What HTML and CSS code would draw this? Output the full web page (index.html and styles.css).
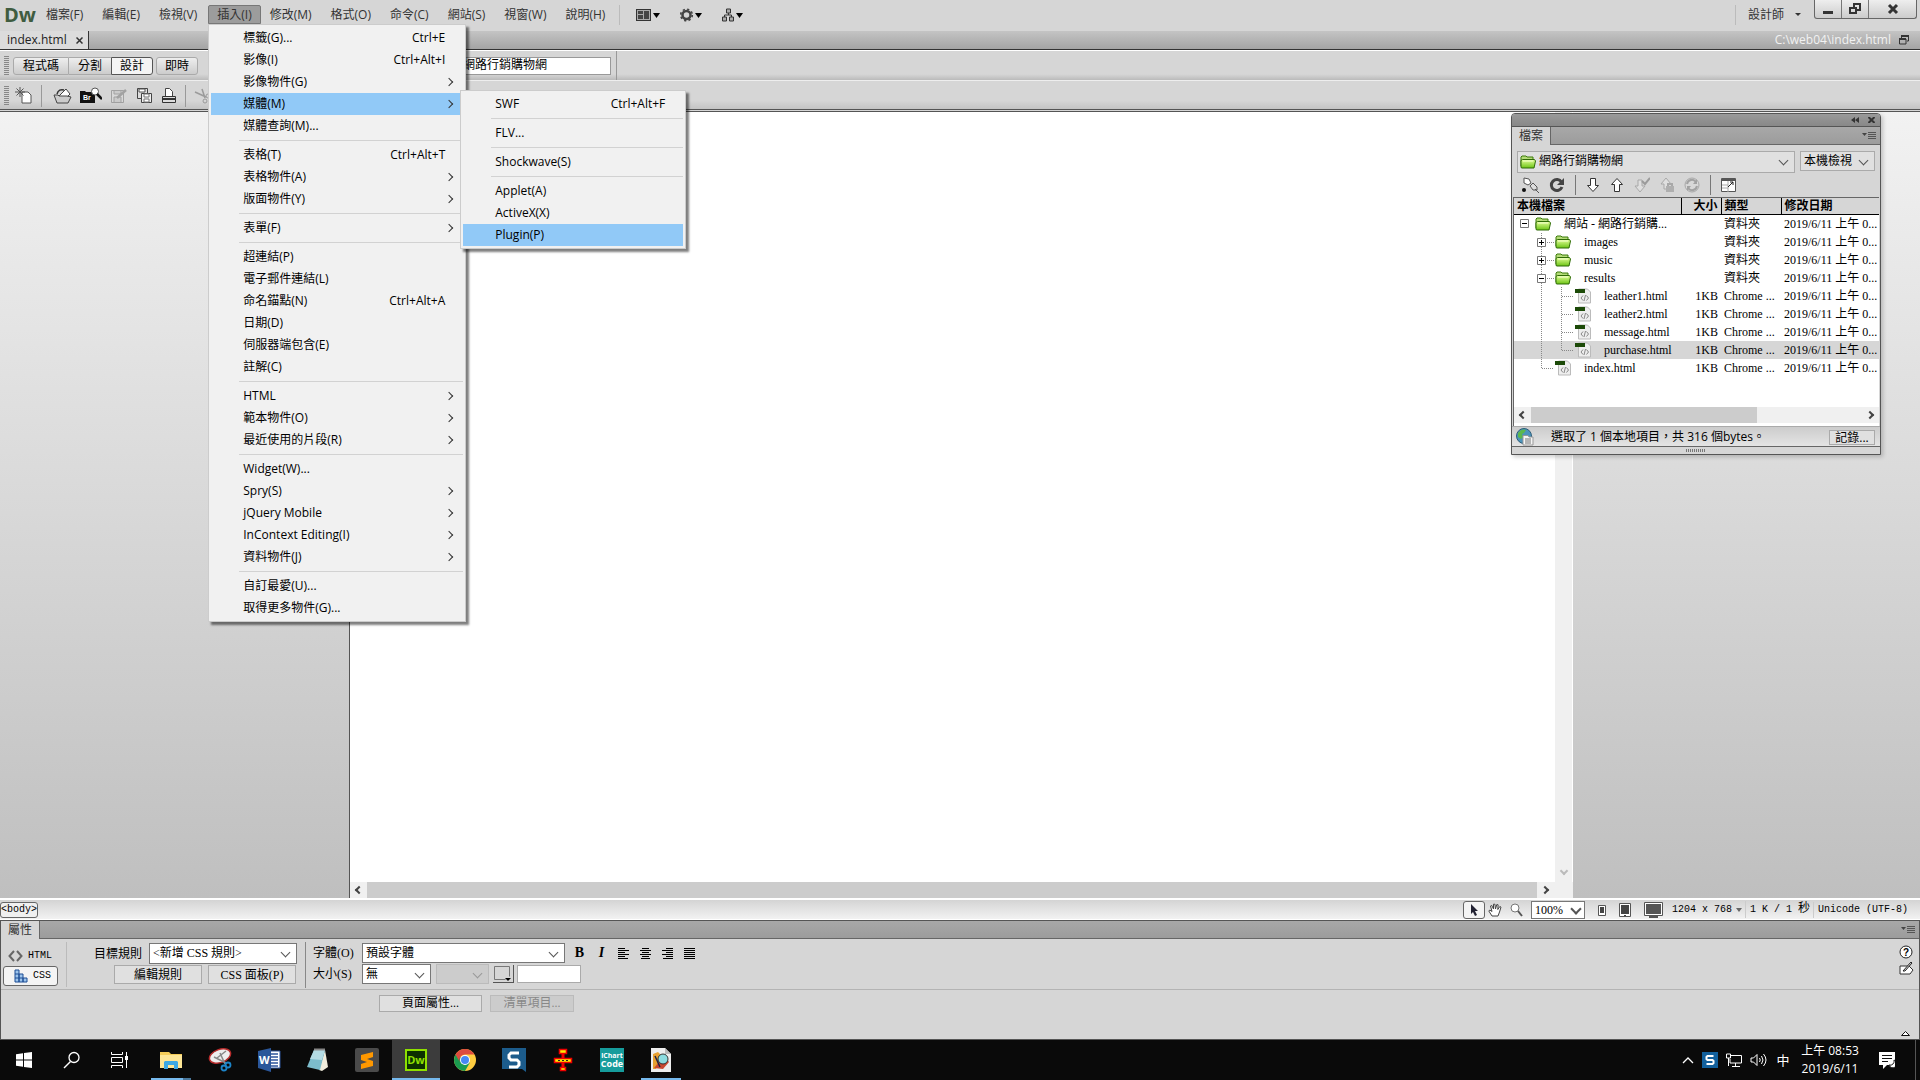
FILE: index.html
```html
<!DOCTYPE html>
<html lang="zh-TW">
<head>
    <meta charset="UTF-8">
    <meta name="viewport" content="width=device-width, initial-scale=1.0">
    <title>index.html</title>
    <link rel="stylesheet" href="styles.css">
</head>
<body>
    <!-- 共用圖示 -->
    <svg class="defs" width="0" height="0">
        <defs>
            <linearGradient id="green" x1="0" y1="0" x2="0" y2="1">
                <stop offset="0" stop-color="#e4ff9a"/>
                <stop offset="1" stop-color="#6cc414"/>
            </linearGradient>
            <symbol id="folder" viewBox="0 0 16 14">
                <path d="M1 11V2l1-1h4l1 1h6v3" fill="#b4dc78" stroke="#3c7a0a"/>
                <path d="M1 12.500V5.500L2.500 4.500H14.500L15.500 6L14 13H2Z" fill="url(#green)" stroke="#2f6b06"/>
                <path d="M3 6h10" stroke="#f4ffd0"/>
            </symbol>
            <symbol id="page" viewBox="0 0 16 16">
                <path d="M3.500 1h9l3 3v11h-12z" fill="#eee" stroke="#bbb"/>
                <rect x="0" y="1" width="10" height="4" fill="#1c4a08"/>
                <path d="M8 7.500L6 10l2 2.500M11.500 7.500l2 2.500-2 2.500M10.500 7l-1.500 6" fill="none" stroke="#888"/>
            </symbol>
            <symbol id="menu-lines" viewBox="0 0 14 8">
                <path d="M0 1h5L2.500 4z" fill="#444"/>
                <path d="M6 .5h8M6 2.500h8M6 4.500h8M6 6.500h8" stroke="#555"/>
            </symbol>
        </defs>
    </svg>

    <header class="menubar">
        <span class="logo">Dw</span>
        <nav class="menus">
            <button>檔案(F)</button>
            <button>編輯(E)</button>
            <button>檢視(V)</button>
            <div class="menu-open">
                <button class="active">插入(I)</button>
                <ul class="popup insert-menu">
                    <li>標籤(G)...<kbd>Ctrl+E</kbd></li>
                    <li>影像(I)<kbd>Ctrl+Alt+I</kbd></li>
                    <li class="more">影像物件(G)</li>
                    <li class="more selected">媒體(M)
                        <ul class="popup media-menu">
                            <li>SWF<kbd>Ctrl+Alt+F</kbd></li>
                            <li class="line"></li>
                            <li>FLV...</li>
                            <li class="line"></li>
                            <li>Shockwave(S)</li>
                            <li class="line"></li>
                            <li>Applet(A)</li>
                            <li>ActiveX(X)</li>
                            <li class="selected">Plugin(P)</li>
                        </ul>
                    </li>
                    <li>媒體查詢(M)...</li>
                    <li class="line"></li>
                    <li>表格(T)<kbd>Ctrl+Alt+T</kbd></li>
                    <li class="more">表格物件(A)</li>
                    <li class="more">版面物件(Y)</li>
                    <li class="line"></li>
                    <li class="more">表單(F)</li>
                    <li class="line"></li>
                    <li>超連結(P)</li>
                    <li>電子郵件連結(L)</li>
                    <li>命名錨點(N)<kbd>Ctrl+Alt+A</kbd></li>
                    <li>日期(D)</li>
                    <li>伺服器端包含(E)</li>
                    <li>註解(C)</li>
                    <li class="line"></li>
                    <li class="more">HTML</li>
                    <li class="more">範本物件(O)</li>
                    <li class="more">最近使用的片段(R)</li>
                    <li class="line"></li>
                    <li>Widget(W)...</li>
                    <li class="more">Spry(S)</li>
                    <li class="more">jQuery Mobile</li>
                    <li class="more">InContext Editing(I)</li>
                    <li class="more">資料物件(J)</li>
                    <li class="line"></li>
                    <li>自訂最愛(U)...</li>
                    <li>取得更多物件(G)...</li>
                </ul>
            </div>
            <button>修改(M)</button>
            <button>格式(O)</button>
            <button>命令(C)</button>
            <button>網站(S)</button>
            <button>視窗(W)</button>
            <button>說明(H)</button>
        </nav>
        <div class="layout-tools">
            <button aria-label="版面">
                <svg width="24" height="14" viewBox="0 0 24 14"><rect x=".5" y="1.500" width="14" height="11" fill="#aaa" stroke="#333"/><path d="M2 3h5v3H2zM2 7h5v4H2zM8 3h5v8H8z" fill="#444"/><path d="M17 5h7l-3.500 5z"/></svg>
            </button>
            <button aria-label="擴充功能">
                <svg width="22" height="14" viewBox="0 0 22 14"><circle cx="6.500" cy="7" r="4" fill="none" stroke="#444" stroke-width="2.500"/><circle cx="6.500" cy="7" r="5.800" fill="none" stroke="#444" stroke-width="1.600" stroke-dasharray="2.200 2.350"/><path d="M15 5h7l-3.500 5z"/></svg>
            </button>
            <button aria-label="網站">
                <svg width="22" height="14" viewBox="0 0 22 14"><path d="M4.500 1h4v4h-4zM.5 9h4v4h-4zM7.500 9h4v4h-4z" fill="#aaa" stroke="#333"/><path d="M6.500 5v2M2.500 9V7h7v2" fill="none" stroke="#333"/><path d="M14 5h7l-3.500 5z"/></svg>
            </button>
        </div>
        <button class="workspace-name">設計師<i class="tri"></i></button>
        <div class="window-buttons">
            <button aria-label="最小化"><svg width="12" height="12" viewBox="0 0 12 12"><path d="M1 8h10v3H1z" fill="#333"/></svg></button>
            <button aria-label="還原"><svg width="12" height="12" viewBox="0 0 12 12"><path d="M5 4V1h6v6H8M1 5h6v5H1z" fill="none" stroke="#333" stroke-width="2"/></svg></button>
            <button class="close" aria-label="關閉"><svg width="12" height="12" viewBox="0 0 12 12"><path d="M2 2l8 8M10 2l-8 8" stroke="#333" stroke-width="3"/></svg></button>
        </div>
    </header>

    <div class="doc-tabs">
        <div class="doc-tab">index.html<button aria-label="關閉檔案"><svg width="7" height="7" viewBox="0 0 7 7"><path d="M.5.5l6 6M6.500.5l-6 6" stroke="#333" stroke-width="1.500"/></svg></button></div>
        <span class="doc-path">C:\web04\index.html</span>
        <svg width="10" height="10" viewBox="0 0 10 10"><path d="M2.500 3V1h7v5H8M.5 4h6.500v5H.5z" fill="none" stroke="#333"/><path d="M2 1h8M0 4h7" stroke="#333" stroke-width="2"/></svg>
    </div>

    <div class="view-bar">
        <div class="view-group">
            <i class="grip"></i>
            <div class="views">
                <button>程式碼</button>
                <button>分割</button>
                <button class="on">設計</button>
            </div>
            <button class="live">即時</button>
            <input type="text" class="doc-title" aria-label="標題" value="網路行銷購物網">
        </div>
    </div>

    <div class="standard-bar">
        <i class="grip"></i>
        <button aria-label="開新檔案"><svg width="18" height="18" viewBox="0 0 18 18"><path d="M7 5h6l3 3v8H7z" fill="#fff" stroke="#555"/><path d="M5 0v10M0 5h10M1.500 1.500l7 7M8.500 1.500l-7 7" stroke="#555"/></svg></button>
        <i class="rule"></i>
        <button class="open" aria-label="開啟"><svg width="19" height="18" viewBox="0 0 19 18"><path d="M6 9l7-7 4 5-4 4z" fill="#fff" stroke="#444"/><path d="M1 8h4l1 1h8l4 1-3 6H4z" fill="#ccc" stroke="#444"/><path d="M4 7c1-4 4-5 7-4" fill="none" stroke="#333" stroke-width="1.500"/></svg></button>
        <button aria-label="Bridge"><svg width="22" height="18" viewBox="0 0 22 18"><path d="M0 4h5l1 1h9v11H0z" fill="#111"/><circle cx="15" cy="4.500" r="3.500" fill="#fff" stroke="#555"/><path d="M17 7l5 5" stroke="#111" stroke-width="2.500"/><text x="3" y="13" font-family="Liberation Sans" font-size="7" font-weight="bold" fill="#fff">Br</text></svg></button>
        <button class="dim" aria-label="儲存"><svg width="18" height="18" viewBox="0 0 18 18"><path d="M1.500 3.500h12v12h-12z" fill="#ddd" stroke="#555"/><path d="M4 15v-5h7v5M4 4v3h7V4" fill="#bbb" stroke="#555"/><path d="M7 11l9-8" stroke="#555" stroke-width="2.500"/></svg></button>
        <button aria-label="全部儲存"><svg width="17" height="18" viewBox="0 0 17 18"><path d="M1.500 1.500h10v10h-10z" fill="#ddd" stroke="#444"/><path d="M3 2h6v3H3z" fill="#fff" stroke="#555"/><path d="M5.500 6.500h10v9h-10z" fill="#eee" stroke="#444"/><path d="M8 7h5v3H8zM8 12h5v3H8z" fill="#fff" stroke="#777"/></svg></button>
        <button aria-label="列印"><svg width="16" height="18" viewBox="0 0 16 18"><path d="M4.500 9V1.500h4l3 3V9" fill="#fff" stroke="#444"/><path d="M1.500 9.500h13v6h-13z" fill="#ddd" stroke="#333"/><path d="M2 12h12" stroke="#333" stroke-width="2"/></svg></button>
        <i class="rule"></i>
        <button class="dim" aria-label="剪下"><svg width="18" height="18" viewBox="0 0 18 18"><path d="M1 5l11 5M8 2l3 9" stroke="#444" stroke-width="1.500"/><circle cx="14" cy="9" r="2" fill="none" stroke="#444"/><circle cx="11" cy="14" r="2" fill="none" stroke="#444"/></svg></button>
    </div>

    <main class="workspace">
        <div class="document">
            <div class="page"></div>
            <div class="vscroll"><i class="arrow down"></i></div>
            <div class="hscroll">
                <i class="arrow left"></i>
                <div class="thumb"></div>
                <i class="arrow right"></i>
            </div>
        </div>

        <section class="files-panel">
            <div class="panel-title">
                <svg width="8" height="6" viewBox="0 0 8 6"><path d="M4 0v6L0 3zM8 0v6L4 3z" fill="#333"/></svg>
                <svg width="7" height="6" viewBox="0 0 7 6"><path d="M.5 0l6 6M6.500 0l-6 6" stroke="#333" stroke-width="2"/></svg>
            </div>
            <div class="panel-head">
                <span class="panel-tab">檔案</span>
                <svg width="14" height="8"><use href="#menu-lines"/></svg>
            </div>
            <div class="site-row">
                <span class="select site">
                    <svg width="16" height="14"><use href="#folder"/></svg>
                    <select aria-label="網站"><option>網路行銷購物網</option></select>
                </span>
                <span class="select site-view">
                    <select aria-label="檢視"><option>本機檢視</option></select>
                </span>
            </div>
            <div class="file-tools">
                <button aria-label="連線"><svg width="18" height="16" viewBox="0 0 18 16"><path d="M3 1l5 1 2 4-3 2-4-2z" fill="#fff" stroke="#555"/><path d="M9 9l3-3 4 4v3h-4z" fill="#ddd" stroke="#555"/><path d="M14 12l4 4" stroke="#555"/><circle cx="3" cy="13" r="2" fill="#111"/></svg></button>
                <button aria-label="重新整理"><svg width="16" height="16" viewBox="0 0 16 16"><path d="M12.500 5A5.500 5.500 0 1 0 13 10" fill="none" stroke="#444" stroke-width="3"/><path d="M8 8h7V1z" fill="#444"/></svg></button>
                <i class="rule"></i>
                <button aria-label="取得檔案"><svg width="14" height="16" viewBox="0 0 14 16"><path d="M4.500 1.500h5v7h3L7 14.500 1.500 8.500h3z" fill="#fff" stroke="#333"/></svg></button>
                <button aria-label="上傳檔案"><svg width="14" height="16" viewBox="0 0 14 16"><path d="M4.500 14.500h5v-7h3L7 1.500 1.500 7.500h3z" fill="#fff" stroke="#333"/></svg></button>
                <button class="dim" aria-label="取出"><svg width="16" height="16" viewBox="0 0 16 16"><path d="M4 3h4v6h3l-5 6-5-6h3z" fill="#eee" stroke="#666"/><path d="M8 4l3 3 5-6" fill="none" stroke="#444" stroke-width="2"/></svg></button>
                <button class="dim" aria-label="存回"><svg width="14" height="16" viewBox="0 0 14 16"><path d="M4 12V7H1l5-6 5 6H8v5z" fill="#eee" stroke="#666"/><path d="M6 9h8v6H6z" fill="#777"/><path d="M8 9V7h4v2" fill="none" stroke="#666" stroke-width="2"/></svg></button>
                <button class="dim" aria-label="同步"><svg width="16" height="16" viewBox="0 0 16 16"><circle cx="8" cy="8" r="7" fill="#ddd" stroke="#666"/><path d="M3 7a5 5 0 0 1 9-2M13 9a5 5 0 0 1-9 2" fill="none" stroke="#555" stroke-width="2"/><path d="M13 2v5H9zM3 14V9h4z" fill="#555"/></svg></button>
                <i class="rule"></i>
                <button aria-label="展開"><svg width="15" height="15" viewBox="0 0 15 15"><path d="M.5.5h14v13H.5z" fill="#fff" stroke="#555"/><path d="M0 2h15" stroke="#555" stroke-width="2"/><path d="M1 7h6M1 10h6M7 3v11" stroke="#aaa"/><path d="M7 9l5-5M9 4h3v3" fill="none" stroke="#222"/></svg></button>
            </div>
            <div class="file-list">
                <table>
                    <colgroup><col class="c-name"><col class="c-size"><col class="c-type"><col></colgroup>
                    <thead>
                        <tr><th>本機檔案</th><th class="num">大小</th><th>類型</th><th>修改日期</th></tr>
                    </thead>
                    <tbody>
                        <tr>
                            <td><div class="node"><svg width="21" height="18"><path d="M6.500 4.500h8v8h-8z" fill="#fff" stroke="#777"/><path d="M8 8.500h5" stroke="#000"/></svg><svg width="16" height="14"><use href="#folder"/></svg><span>網站 - 網路行銷購...</span></div></td>
                            <td></td><td>資料夾</td><td>2019/6/11 上午 0...</td>
                        </tr>
                        <tr>
                            <td><div class="node"><svg width="41" height="18"><path class="dots" d="M27.500 0v18M33 9.500h8"/><path d="M23.500 5.500h8v8h-8z" fill="#fff" stroke="#777"/><path d="M25 9.500h5M27.500 7v5" stroke="#000"/></svg><svg width="16" height="14"><use href="#folder"/></svg><span>images</span></div></td>
                            <td></td><td>資料夾</td><td>2019/6/11 上午 0...</td>
                        </tr>
                        <tr>
                            <td><div class="node"><svg width="41" height="18"><path class="dots" d="M27.500 0v18M33 9.500h8"/><path d="M23.500 5.500h8v8h-8z" fill="#fff" stroke="#777"/><path d="M25 9.500h5M27.500 7v5" stroke="#000"/></svg><svg width="16" height="14"><use href="#folder"/></svg><span>music</span></div></td>
                            <td></td><td>資料夾</td><td>2019/6/11 上午 0...</td>
                        </tr>
                        <tr>
                            <td><div class="node"><svg width="41" height="18"><path class="dots" d="M27.500 0v18M33 9.500h8"/><path d="M23.500 5.500h8v8h-8z" fill="#fff" stroke="#777"/><path d="M25 9.500h5" stroke="#000"/></svg><svg width="16" height="14"><use href="#folder"/></svg><span>results</span></div></td>
                            <td></td><td>資料夾</td><td>2019/6/11 上午 0...</td>
                        </tr>
                        <tr>
                            <td><div class="node"><svg width="61" height="18"><path class="dots" d="M27.500 0v18M47.500 0v18M48 9.500h12"/></svg><svg width="16" height="16"><use href="#page"/></svg><span>leather1.html</span></div></td>
                            <td class="num">1KB</td><td>Chrome ...</td><td>2019/6/11 上午 0...</td>
                        </tr>
                        <tr>
                            <td><div class="node"><svg width="61" height="18"><path class="dots" d="M27.500 0v18M47.500 0v18M48 9.500h12"/></svg><svg width="16" height="16"><use href="#page"/></svg><span>leather2.html</span></div></td>
                            <td class="num">1KB</td><td>Chrome ...</td><td>2019/6/11 上午 0...</td>
                        </tr>
                        <tr>
                            <td><div class="node"><svg width="61" height="18"><path class="dots" d="M27.500 0v18M47.500 0v18M48 9.500h12"/></svg><svg width="16" height="16"><use href="#page"/></svg><span>message.html</span></div></td>
                            <td class="num">1KB</td><td>Chrome ...</td><td>2019/6/11 上午 0...</td>
                        </tr>
                        <tr class="current">
                            <td><div class="node"><svg width="61" height="18"><path class="dots" d="M27.500 0v18M47.500 0v10M48 9.500h12"/></svg><svg width="16" height="16"><use href="#page"/></svg><span>purchase.html</span></div></td>
                            <td class="num">1KB</td><td>Chrome ...</td><td>2019/6/11 上午 0...</td>
                        </tr>
                        <tr>
                            <td><div class="node"><svg width="41" height="18"><path class="dots" d="M27.500 0v10M28 9.500h12"/></svg><svg width="16" height="16"><use href="#page"/></svg><span>index.html</span></div></td>
                            <td class="num">1KB</td><td>Chrome ...</td><td>2019/6/11 上午 0...</td>
                        </tr>
                    </tbody>
                </table>
                <div class="hscroll">
                    <i class="arrow left"></i>
                    <div class="thumb"></div>
                    <i class="arrow right"></i>
                </div>
            </div>
            <div class="files-status">
                <svg width="18" height="18" viewBox="0 0 18 18"><circle cx="8" cy="8" r="7.500" fill="#4c94bc" stroke="#2c5c78"/><path d="M2 5c3-4 6-4 8-3l-2 3-2 1 1 3-2 2-3-2z" fill="#5cb84c"/><path d="M7 7.500h5l1 1.500h4v8H7z" fill="#f4f4f4" stroke="#999"/><path d="M9 11h6M9 13h6M9 15h6" stroke="#777"/></svg>
                <span>選取了 1 個本地項目，共 316 個bytes。</span>
                <button>記錄...</button>
            </div>
            <div class="resize-grip"><i></i></div>
        </section>
    </main>

    <div class="status-bar">
        <button class="tag">&lt;body&gt;</button>
        <div class="status-tools">
            <button class="pointer" aria-label="選取工具"><svg width="10" height="12" viewBox="0 0 10 12"><path d="M2 0v10l2-2 2 4 2-1-2-4h3z" fill="#223"/></svg></button>
            <button aria-label="手形工具"><svg width="14" height="14" viewBox="0 0 14 14"><path d="M4 13L.8 8l1-1L4 8.500 2.500 3l1.200-.6L5.500 6V1.200h1.400L7.500 6l1.300-4.500 1.300.3L9.800 6.500l2-3 1.200.6L11.500 9 10 13z" fill="#fff" stroke="#444"/></svg></button>
            <button aria-label="縮放工具"><svg width="13" height="14" viewBox="0 0 13 14"><circle cx="5" cy="5" r="4" fill="#fff" stroke="#777"/><path d="M8 8l4 5" stroke="#555" stroke-width="2"/></svg></button>
            <span class="select zoom"><select aria-label="縮放"><option>100%</option></select></span>
            <button class="device" aria-label="手機"><svg width="8" height="12" viewBox="0 0 8 12"><path d="M.5 1.500h7v10h-7z" fill="#fff" stroke="#555"/><path d="M2 3h4v6H2z" fill="#444"/></svg></button>
            <button class="device" aria-label="平板"><svg width="12" height="14" viewBox="0 0 12 14"><path d="M.5.5h11v13H.5z" fill="#fff" stroke="#555"/><path d="M2 2h8v9H2zM5 12h2v1H5z" fill="#444"/></svg></button>
            <button class="device" aria-label="桌面"><svg width="19" height="16" viewBox="0 0 19 16"><path d="M.5.5h18v13H.5z" fill="#fff" stroke="#555"/><path d="M2 2h15v10H2zM5 14h9v2H5z" fill="#555"/></svg></button>
            <button class="size">1204 x 768<i class="mini-arrow"></i></button>
            <span class="info">1 K / 1 <b>秒</b></span>
            <span class="info">Unicode (UTF-8)</span>
        </div>
    </div>

    <section class="properties">
        <div class="panel-head">
            <span class="panel-tab">屬性</span>
            <svg width="14" height="8"><use href="#menu-lines"/></svg>
        </div>
        <div class="prop-main">
            <div class="modes">
                <button><svg width="15" height="12" viewBox="0 0 15 12"><path d="M6 1L1.500 6 6 11M9 1l4.500 5L9 11" fill="none" stroke="#666" stroke-width="2"/></svg>HTML</button>
                <button class="on"><svg width="14" height="14" viewBox="0 0 14 14"><path d="M1 1h4v12H1zM5 5h4v8H5zM9 9h4v4H9zM1 5h4M1 9h8" fill="#9cc4ec" stroke="#1c4c94"/></svg>CSS</button>
            </div>
            <div class="rules">
                <label for="rule">目標規則</label>
                <span class="select"><select id="rule"><option>&lt;新增 CSS 規則&gt;</option></select></span>
                <div class="rule-buttons">
                    <button class="push">編輯規則</button>
                    <button class="push">CSS 面板(P)</button>
                </div>
            </div>
            <div class="fonts">
                <div class="line-row">
                    <label for="font">字體(O)</label>
                    <span class="select font"><select id="font"><option>預設字體</option></select></span>
                    <button class="bold">B</button>
                    <button class="italic">I</button>
                    <button aria-label="靠左對齊"><svg width="11" height="11" viewBox="0 0 11 11"><path d="M0 .5h7M0 2.500h11M0 4.500h7M0 6.500h11M0 8.500h7M0 10.500h10" stroke="#000"/></svg></button>
                    <button aria-label="置中對齊"><svg width="11" height="11" viewBox="0 0 11 11"><path d="M2 .5h7M0 2.500h11M2 4.500h7M0 6.500h11M2 8.500h7M1 10.500h9" stroke="#000"/></svg></button>
                    <button aria-label="靠右對齊"><svg width="11" height="11" viewBox="0 0 11 11"><path d="M4 .5h7M0 2.500h11M4 4.500h7M0 6.500h11M4 8.500h7M1 10.500h10" stroke="#000"/></svg></button>
                    <button aria-label="左右對齊"><svg width="11" height="11" viewBox="0 0 11 11"><path d="M0 .5h11M0 2.500h11M0 4.500h11M0 6.500h11M0 8.500h11M0 10.500h11" stroke="#000"/></svg></button>
                </div>
                <div class="line-row">
                    <label for="size">大小(S)</label>
                    <span class="select font-size"><select id="size"><option>無</option></select></span>
                    <span class="select unit"><select aria-label="單位" disabled><option></option></select></span>
                    <button class="swatch" aria-label="文字顏色"><svg width="19" height="18" viewBox="0 0 19 18"><path d="M1.500 14.500v-13h15v10M1.500 14.500h11" fill="none" stroke="#777"/><path d="M12 13h6l-3 3z"/></svg></button>
                    <input type="text" class="color" aria-label="顏色值">
                </div>
            </div>
            <div class="help">
                <button aria-label="說明"><svg width="14" height="14" viewBox="0 0 14 14"><circle cx="7" cy="7" r="6" fill="#fff" stroke="#222"/><text x="7" y="11" text-anchor="middle" font-family="Liberation Sans" font-size="10" font-weight="bold">?</text></svg></button>
                <button aria-label="快速標籤編輯"><svg width="15" height="14" viewBox="0 0 15 14"><path d="M1 5h9l4 4-3 4H1z" fill="#fff" stroke="#333"/><path d="M4 10l8-9 1 1-7 8z" fill="#ddd" stroke="#222"/></svg></button>
            </div>
        </div>
        <div class="prop-more">
            <button class="push page-props">頁面屬性...</button>
            <button class="push list-item" disabled>清單項目...</button>
            <svg width="9" height="5" viewBox="0 0 9 5"><path d="M.5 4.500L4.500.5l4 4z" fill="#fff" stroke="#111"/></svg>
        </div>
    </section>

    <footer class="taskbar">
        <div class="apps">
            <button aria-label="開始"><svg width="16" height="16" viewBox="0 0 16 16"><path d="M0 2.300L7 1.300v6.200H0zM8 1.100L16 0v7.500H8zM0 8.500h7v6.200l-7-1zM8 8.500h8V16l-8-1.100z" fill="#fff"/></svg></button>
            <button aria-label="搜尋"><svg width="18" height="18" viewBox="0 0 18 18"><circle cx="11" cy="6.500" r="5" fill="none" stroke="#fff" stroke-width="1.300"/><path d="M7.500 10.500L1 17" stroke="#fff" stroke-width="1.500"/></svg></button>
            <button class="task-view" aria-label="工作檢視"><svg width="18" height="16" viewBox="0 0 18 16"><path d="M.5 0v2.500h11V0M.5 5.500h11v5H.5zM.5 16v-2.500h11V16M15.500 0v16" fill="none" stroke="#fff"/><path d="M14 4h3v4h-3z" fill="#fff"/></svg></button>
            <button class="running stacked" aria-label="檔案總管"><svg width="24" height="20" viewBox="0 0 24 20"><path d="M1 2h9l2 2h11v14H1z" fill="#f4cc58"/><path d="M1 5h22v13H1z" fill="#fde696"/><path d="M5 19v-7l1-1h12l1 1v7h-4v-4H9v4z" fill="#3ca8e4"/></svg></button>
            <button aria-label="剪取工具"><svg width="24" height="24" viewBox="0 0 24 24"><ellipse cx="12" cy="8" rx="11" ry="6.500" transform="rotate(-20 12 8)" fill="#eee" stroke="#b82c2c" stroke-width="1.500"/><path d="M9 10l9-7M12 5l5 11M6 9l12 6" stroke="#888" stroke-width="1.500"/><circle cx="16" cy="20" r="2.500" fill="none" stroke="#1c84c8" stroke-width="1.800"/><circle cx="20" cy="17" r="2.500" fill="none" stroke="#1c84c8" stroke-width="1.800"/></svg></button>
            <button aria-label="Word"><svg width="24" height="24" viewBox="0 0 24 24"><path d="M10 3h13v17H10z" fill="#fff" stroke="#2c549c"/><path d="M14 6h7M14 9h7M14 12h7M14 15h7M14 18h7" stroke="#2c549c" stroke-width="1.300"/><path d="M1 3l13-3v24L1 20z" fill="#2b579a"/><text x="2" y="16" font-family="Open Sans" font-size="11" font-weight="bold" fill="#fff">W</text></svg></button>
            <button aria-label="記事本"><svg width="24" height="24" viewBox="0 0 24 24"><path d="M19 2l3 17-6 4-3-1z" fill="#f0ecdc"/><path d="M8 2h11l-5 20-13-3z" fill="#7cbccc"/><path d="M8 2h11l-3 10-12-1z" fill="#b4dce4"/><path d="M8 1.500h11" stroke="#888" stroke-width="2"/></svg></button>
            <button aria-label="Sublime Text"><svg width="24" height="24" viewBox="0 0 24 24"><rect width="24" height="24" rx="2" fill="#4a4a4a"/><path d="M18 4v5l-6 2 6 2v5L6 21v-5l6-2-6-2V7z" fill="#ff9800"/></svg></button>
            <button class="running focused" aria-label="Dreamweaver"><svg width="22" height="22" viewBox="0 0 22 22"><rect x="1" y="1" width="20" height="20" fill="#0c3000" stroke="#8fe000" stroke-width="2"/><text x="11" y="15" text-anchor="middle" font-family="Open Sans" font-size="11" font-weight="bold" fill="#8fe000">Dw</text></svg></button>
            <button aria-label="Chrome"><svg width="22" height="22" viewBox="0 0 22 22"><circle cx="11" cy="11" r="11" fill="#ffcd40"/><path d="M11 11L1.500 5.500A11 11 0 0 0 11 22l4.800-8.300z" fill="#1a9c50"/><path d="M1.500 5.500a11 11 0 0 1 19 0H11a5.500 5.500 0 0 0-4.800 8.300z" fill="#dd4b3e"/><circle cx="11" cy="11" r="5" fill="#fff"/><circle cx="11" cy="11" r="4" fill="#4688f4"/></svg></button>
            <button aria-label="Snagit"><svg width="24" height="24" viewBox="0 0 24 24"><path d="M0 0h24v24l-4-3H0z" fill="#1c5c8c"/><path d="M17 5H9L7 7v3l2 2h6l2 2v3l-2 2H7" fill="none" stroke="#fff" stroke-width="3"/></svg></button>
            <button aria-label="流程圖"><svg width="20" height="24" viewBox="0 0 20 24"><path d="M10 4v18" stroke="#e00" stroke-width="3"/><path d="M6.500 1.500h7v4h-7zM1.500 10.500h17v4h-17zM7.500 19.500h5v3h-5z" fill="#fe0" stroke="#e00" stroke-width="1.500"/><path d="M5 12.500h2M9 12.500h2M13 12.500h2" stroke="#222"/></svg></button>
            <button aria-label="iChart Code"><svg width="24" height="24" viewBox="0 0 24 24"><rect width="24" height="24" fill="#169c9c"/><text x="12" y="10" text-anchor="middle" font-family="Open Sans" font-size="7" font-weight="bold" fill="#fff">iChart</text><text x="12" y="19" text-anchor="middle" font-family="Open Sans" font-size="9" font-weight="bold" fill="#fff">Code</text></svg></button>
            <button class="running" aria-label="小畫家"><svg width="20" height="24" viewBox="0 0 20 24"><path d="M0 0h14l6 6v18H0z" fill="#eee"/><path d="M2 6l5-2 4 4-6 13H2z" fill="#e8a030"/><path d="M3 20l10-12 5 6-6 7z" fill="#c84830"/><circle cx="12" cy="11" r="5" fill="#8cdce0" stroke="#333"/><path d="M4 8l5 11" stroke="#224" stroke-width="1.500"/><path d="M14 0l6 6h-6z" fill="#bbb"/></svg></button>
        </div>
        <div class="tray">
            <svg width="12" height="7" viewBox="0 0 12 7"><path d="M1 6l5-5 5 5" fill="none" stroke="#fff" stroke-width="1.300"/></svg>
            <svg width="16" height="16" viewBox="0 0 16 16"><rect width="16" height="16" fill="#12609c"/><path d="M11.500 4h-6L4.500 5v2l1 1h5l1 1v2l-1 1h-6" fill="none" stroke="#fff" stroke-width="2"/></svg>
            <svg width="16" height="14" viewBox="0 0 16 14"><path d="M5 2.500h10.500v7.500H4V6M9.500 10v3M6 13.500h8M.5 1h4v4h-4zM2.500 5v8" fill="none" stroke="#fff"/></svg>
            <svg width="17" height="14" viewBox="0 0 17 14"><path d="M1 5h2.500L7 1.500v11L3.500 9H1zM9.500 5q1.500 2 0 4M11.500 3q3 4 0 8M13.500 1q5 6 0 12" fill="none" stroke="#fff"/></svg>
            <span class="ime">中</span>
            <div class="clock"><time>上午 08:53</time><time>2019/6/11</time></div>
            <button aria-label="通知"><svg width="16" height="17" viewBox="0 0 16 17"><path d="M0 0h16v13H8l-4 4v-4H0z" fill="#fff"/><path d="M3 3.500h10M3 6.500h10M3 9.500h6" stroke="#111"/><path d="M15 8a4 4 0 1 1-5 5 4 4 0 0 0 5-5" fill="#fff" stroke="#222"/></svg></button>
        </div>
    </footer>
</body>
</html>
```
FILE: styles.css
```css
:root {
    --gray: #d6d6d6;
    --ui: "Open Sans", "Noto Sans CJK TC", sans-serif;
    --pixel: "Liberation Serif", "Noto Sans CJK TC", serif;
    --mono: "Liberation Mono", "Noto Sans CJK TC", monospace;
}

* {
    box-sizing: border-box;
    margin: 0;
    padding: 0;
}

body {
    display: flex;
    flex-direction: column;
    height: 100vh;
    overflow: hidden;
    background: var(--gray);
    font: 12px/18px var(--ui);
    color: #000;
}

button, input, select {
    font: inherit;
    color: inherit;
    border: 0;
    border-radius: 0;
    background: none;
}

svg {
    display: block;
    flex: none;
}

.defs {
    position: absolute;
}

/* 選單列 */
.menubar {
    display: flex;
    align-items: center;
    height: 31px;
    flex: none;
    padding-bottom: 2px;
}

.logo {
    width: 38px;
    padding-left: 4px;
    font: bold 20px/26px var(--ui);
    color: #3f5c40;
}

.menus {
    display: flex;
    gap: 3px;
    color: #333;
}

.menus > button, .menu-open > button {
    height: 19px;
    padding: 0 8px;
}

.menu-open {
    position: relative;
    margin-right: -2px;
}

.menu-open > .active {
    background: #9c9c9c;
    border: 1px solid #777;
    border-radius: 2px 2px 0 0;
    padding: 0 8px;
    line-height: 17px;
    display: block;
}

.popup {
    position: absolute;
    z-index: 10;
    list-style: none;
    padding: 2px;
    background: #f1f1f1;
    border: 1px solid #ccc;
    box-shadow: 3px 3px 2px rgba(0, 0, 0, 0.5);
    color: #000;
}

.insert-menu {
    top: 19px;
    left: 0;
    width: 258px;
}

.media-menu {
    top: -3px;
    left: 249px;
    width: 226px;
}

.popup li {
    position: relative;
    display: flex;
    justify-content: space-between;
    height: 22px;
    line-height: 22px;
    padding: 0 18px 0 32px;
    white-space: nowrap;
}

.popup .line {
    height: 1px;
    margin: 3px 0 3px 28px;
    padding: 0;
    background: #d2d2d2;
}

.popup .selected {
    background: #91c9f7;
}

.popup kbd {
    font: inherit;
}

.more::after {
    content: "";
    position: absolute;
    right: 11px;
    top: 8px;
    width: 5px;
    height: 5px;
    border: solid #333;
    border-width: 1px 1px 0 0;
    transform: rotate(45deg);
}

.layout-tools {
    display: flex;
    gap: 20px;
    margin-left: 6px;
    padding-left: 16px;
    border-left: 1px solid #bbb;
    height: 20px;
    align-items: center;
}

.workspace-name {
    display: flex;
    align-items: center;
    gap: 11px;
    height: 20px;
    margin-left: auto;
    margin-right: 13px;
    padding-left: 12px;
    border-left: 1px solid #bbb;
    color: #333;
}

.tri {
    border: solid transparent;
    border-width: 3px 3px 0;
    border-top-color: #333;
}

.window-buttons {
    display: flex;
    align-self: flex-start;
    height: 19px;
    margin-right: 3px;
    border: 1px solid #666;
    border-top: 0;
    border-radius: 0 0 3px 3px;
    background: linear-gradient(#eee, #ccc);
}

.window-buttons button {
    display: flex;
    align-items: center;
    justify-content: center;
    width: 27px;
    border-right: 1px solid #777;
}

.window-buttons .close {
    width: 47px;
    border-right: 0;
}

/* 文件標籤 */
.doc-tabs {
    display: flex;
    align-items: center;
    height: 19px;
    flex: none;
    padding-right: 11px;
    background: linear-gradient(#c4c4c4, #a4a4a4);
    border-bottom: 1px solid #333;
    gap: 8px;
}

.doc-tab {
    display: flex;
    align-items: center;
    gap: 9px;
    width: 89px;
    height: 18px;
    padding-left: 7px;
    background: #dcdcdc;
    border-right: 1px solid #333;
    color: #222;
}

.doc-path {
    margin-left: auto;
    color: #f2f2f2;
}

/* 工具列 */
.view-bar {
    height: 31px;
    flex: none;
    border-top: 1px solid #fff;
    border-bottom: 1px solid #eee;
    background: linear-gradient(var(--gray) 80%, #bbb);
    font-family: var(--pixel);
}

.view-group {
    display: flex;
    align-items: center;
    width: 617px;
    height: 29px;
    padding-left: 4px;
    border-right: 1px solid #999;
}

.grip {
    width: 5px;
    height: 20px;
    background: repeating-linear-gradient(#888 0 1px, transparent 1px 2px);
}

.views {
    display: flex;
    margin: 0 3px 0 4px;
}

.views button, .live {
    height: 18px;
    padding: 0 8px;
    border: 1px solid #aaa;
    border-radius: 3px;
    background: linear-gradient(#eee, #ccc);
    line-height: 16px;
}

.views button:first-child {
    width: 56px;
    border-radius: 3px 0 0 3px;
}

.views button:nth-child(2) {
    width: 42px;
    border-width: 1px 0;
    border-radius: 0;
}

.views .on {
    border-color: #555;
    border-radius: 0 3px 3px 0;
    background: #f4f4f4;
}

.doc-title {
    width: 152px;
    height: 18px;
    margin: 0 5px 0 auto;
    padding: 0 3px 2px;
    border: 1px solid #999;
    background: #fff;
}

.standard-bar {
    display: flex;
    align-items: center;
    gap: 8px;
    height: 31px;
    flex: none;
    padding: 1px 0 0 4px;
    border-bottom: 3px double #555;
    background: linear-gradient(var(--gray) 70%, #c4c4c4);
}

.standard-bar .grip {
    margin-right: -2px;
}

.standard-bar .open {
    margin-left: 3px;
}

.rule {
    width: 1px;
    height: 22px;
    background: #999;
}

.dim {
    opacity: 0.4;
}

/* 工作區 */
.workspace {
    position: relative;
    display: flex;
    flex: 1;
    min-height: 0;
    background: linear-gradient(#f2f2f2, #bfbfbf);
    border-bottom: 2px solid #fff;
}

.document {
    flex: 1;
    display: grid;
    grid-template: 1fr 16px / 1fr 18px;
    margin: 0 347px 0 349px;
    border-left: 1px solid #555;
}

.page {
    background: #fff;
}

.vscroll {
    display: flex;
    align-items: flex-end;
    justify-content: center;
    padding-bottom: 8px;
    background: #f0f0f0;
    border-right: 1px solid #fff;
}

.hscroll {
    grid-column: 1 / 3;
    display: flex;
    align-items: center;
    gap: 5px;
    height: 16px;
    padding: 0 25px 0 6px;
    background: #f0f0f0;
}

.hscroll .thumb {
    flex: 1;
    height: 100%;
    background: #ccc;
}

.arrow {
    width: 6px;
    height: 6px;
    border: solid #444;
    border-width: 2px 2px 0 0;
    transform: rotate(45deg);
}

.arrow.left {
    transform: rotate(225deg);
}

.arrow.down {
    border-color: #bbb;
    transform: rotate(135deg);
}

/* 檔案面板 */
.files-panel {
    position: absolute;
    top: 1px;
    right: 39px;
    width: 370px;
    border: 1px solid #555;
    border-radius: 4px 4px 0 0;
    background: var(--gray);
    box-shadow: 2px 2px 4px rgba(0, 0, 0, 0.2);
    font-family: var(--pixel);
}

.panel-title {
    display: flex;
    align-items: center;
    justify-content: flex-end;
    gap: 9px;
    height: 13px;
    padding-right: 5px;
    background: linear-gradient(#999, #888);
    border-bottom: 1px solid #555;
    border-radius: 3px 3px 0 0;
}

.panel-head {
    display: flex;
    align-items: center;
    justify-content: space-between;
    height: 18px;
    padding-right: 4px;
    background: linear-gradient(#a8a8a8, #9c9c9c);
    border-bottom: 1px solid #666;
}

.panel-tab {
    height: 18px;
    padding: 0 7px;
    background: var(--gray);
    border-right: 1px solid #666;
    color: #333;
    font-family: var(--ui);
}

.select {
    position: relative;
    display: flex;
    align-items: center;
    height: 20px;
    border: 1px solid #777;
    background: #fff;
}

.select select {
    appearance: none;
    width: 100%;
    height: 100%;
    padding: 0 18px 2px 3px;
}

.select::after {
    content: "";
    position: absolute;
    right: 7px;
    top: 5px;
    width: 6px;
    height: 6px;
    border: solid #555;
    border-width: 0 1px 1px 0;
    transform: rotate(45deg);
    pointer-events: none;
}

.site-row {
    display: flex;
    gap: 5px;
    padding: 6px 5px 0;
}

.site-row .select {
    border-color: #aaa;
    background: #e0e0e0;
}

.site-row .site {
    flex: 1;
    height: 22px;
    padding-left: 2px;
}

.site-view {
    width: 75px;
}

.file-tools {
    display: flex;
    align-items: center;
    gap: 10px;
    height: 24px;
    padding-left: 9px;
}

.file-tools .rule {
    background: #777;
    height: 20px;
}

.file-list {
    height: 229px;
    margin: 0 1px;
    padding-bottom: 3px;
    display: flex;
    flex-direction: column;
    justify-content: space-between;
    background: #fff;
    border: 1px solid #666;
    border-width: 1px 0 0 1px;
}

table {
    width: 100%;
    table-layout: fixed;
    border-collapse: collapse;
}

.c-name {
    width: 167px;
}

.c-size {
    width: 40px;
}

.c-type {
    width: 60px;
}

th {
    height: 16px;
    padding: 0 3px;
    line-height: 14px;
    text-align: left;
    background: var(--gray);
    border: solid #000;
    border-width: 0 1px 1px 0;
}

th:last-child {
    border-right: 0;
}

td {
    height: 18px;
    padding: 0 0 0 3px;
    line-height: 18px;
    white-space: nowrap;
    overflow: hidden;
}

td:first-child {
    padding: 0;
}

.num {
    padding-right: 3px;
    text-align: right;
}

.current {
    background: var(--gray);
}

.node {
    display: flex;
    align-items: center;
    height: 18px;
}

.node span {
    margin-left: 13px;
}

.dots {
    fill: none;
    stroke: #888;
    stroke-dasharray: 1 1;
}

.file-list .hscroll {
    padding: 0 6px;
}

.file-list .thumb {
    flex: none;
    width: 226px;
    margin-right: auto;
}

.files-status {
    display: flex;
    align-items: center;
    height: 20px;
    padding: 0 5px 0 4px;
    border-top: 1px solid #aaa;
    background: linear-gradient(#ccc, #e4e4e4);
    font-family: var(--ui);
}

.files-status span {
    margin-left: 17px;
}

.files-status button {
    width: 46px;
    height: 15px;
    margin: 2px 0 0 auto;
    border: 1px solid #aaa;
    background: #e0e0e0;
    line-height: 13px;
}

.resize-grip {
    display: flex;
    align-items: center;
    justify-content: center;
    height: 8px;
    border-top: 1px solid #666;
}

.resize-grip i {
    width: 20px;
    height: 3px;
    background: repeating-linear-gradient(90deg, #777 0 1px, transparent 1px 2px);
}

/* 狀態列 */
.status-bar {
    display: flex;
    align-items: center;
    justify-content: space-between;
    height: 20px;
    flex: none;
    background: linear-gradient(#d4d4d4, #f2f2f2);
    border-bottom: 1px solid #fff;
    font: 10px/16px var(--mono);
}

.tag {
    height: 16px;
    padding: 0;
    border: 1px solid #666;
    border-radius: 3px;
    background: #f0f0f0;
    line-height: 12px;
}

.status-tools {
    display: flex;
    align-items: center;
    gap: 8px;
    padding-right: 12px;
}

.pointer {
    display: flex;
    align-items: center;
    justify-content: center;
    width: 22px;
    height: 18px;
    margin-right: -5px;
    border: 1px solid #666;
    border-radius: 3px;
    background: #f4f4f4;
}

.zoom {
    width: 54px;
    height: 18px;
    font: 12px/16px var(--pixel);
}

.zoom::after {
    right: 4px;
    top: 3px;
    border-width: 0 2px 2px 0;
}

.device {
    margin-left: 5px;
}

.size {
    display: flex;
    align-items: center;
    gap: 4px;
    margin-left: 1px;
}

.mini-arrow {
    border: solid transparent;
    border-width: 4px 3px 0;
    border-top-color: #666;
}

.info {
    margin-left: -5px;
    padding-left: 4px;
    border-left: 1px solid #ccc;
}

.info b {
    font-size: 12px;
    font-weight: normal;
}

/* 屬性面板 */
.properties {
    height: 120px;
    flex: none;
    border: 1px solid #555;
    font-family: var(--pixel);
}

.prop-main {
    display: flex;
    height: 51px;
    padding-top: 3px;
    border-bottom: 1px solid #b4b4b4;
}

.modes {
    width: 66px;
    height: 45px;
    padding: 4px 0 0 2px;
    border-right: 1px solid #bbb;
    font: 10px/18px var(--mono);
}

.modes button {
    display: flex;
    align-items: center;
    gap: 5px;
    width: 55px;
    height: 20px;
    padding-left: 5px;
}

.modes .on {
    padding-left: 10px;
    border: 1px solid #666;
    border-radius: 3px;
    background: #f4f4f4;
}

.rules {
    display: grid;
    grid-template-columns: auto 148px;
    gap: 1px 7px;
    align-content: start;
    align-items: center;
    width: 239px;
    padding: 1px 8px 0 27px;
    border-right: 1px solid #888;
    height: 46px;
}

.rules .select {
    height: 21px;
}

.rule-buttons {
    grid-column: 1 / 3;
    display: flex;
    justify-content: flex-end;
    gap: 6px;
    padding-right: 1px;
}

.push {
    width: 88px;
    height: 19px;
    border: 1px solid #aaa;
    background: #e0e0e0;
    line-height: 16px;
}

.push:disabled {
    color: #888;
    background: #ccc;
    border-color: #bbb;
}

.fonts {
    display: flex;
    flex-direction: column;
    gap: 1px;
    padding: 1px 0 0 7px;
}

.line-row {
    display: flex;
    align-items: center;
}

.line-row label {
    width: 49px;
}

.line-row .font {
    width: 203px;
    margin-right: 1px;
}

.line-row .font-size {
    width: 69px;
    margin-right: 5px;
}

.line-row .unit {
    width: 53px;
    margin-right: 4px;
    border-color: #bbb;
    background: #ccc;
}

.unit::after {
    border-color: #999;
}

.line-row > button:not(.swatch) {
    width: 22px;
    height: 18px;
    padding-left: 5px;
}

.line-row .bold, .line-row .italic {
    padding: 0;
    font-size: 14px;
    font-weight: bold;
}

.line-row .italic {
    margin-right: 3px;
    font-style: italic;
}

.swatch {
    width: 21px;
    height: 18px;
    border: solid #555;
    border-width: 0 1px 1px 0;
}

.color {
    width: 64px;
    height: 18px;
    margin-left: 3px;
    border: 1px solid #aaa;
    background: #fff;
}

.help {
    display: flex;
    flex-direction: column;
    gap: 2px;
    margin-left: auto;
    padding: 3px 5px 0 0;
}

.prop-more {
    display: flex;
    align-items: flex-start;
    height: 49px;
    padding: 5px 9px 0 378px;
}

.page-props, .list-item {
    width: 103px;
    height: 17px;
    margin-right: 8px;
    line-height: 15px;
}

.list-item {
    width: 84px;
}

.prop-more svg {
    margin: auto 0 3px auto;
}

/* 工作列 */
.taskbar {
    display: flex;
    justify-content: space-between;
    height: 40px;
    flex: none;
    background: #0a0a0a;
    color: #fff;
}

.apps {
    display: flex;
    gap: 1px;
}

.apps button {
    display: flex;
    align-items: center;
    justify-content: center;
    width: 48px;
    height: 40px;
}

.apps button:first-child, .apps button:nth-child(2) {
    margin-right: -1px;
}

.apps .task-view {
    margin-right: 2px;
}

.running {
    position: relative;
}

.running::after {
    content: "";
    position: absolute;
    bottom: 0;
    left: 4px;
    right: 4px;
    height: 2px;
    background: #76b9ed;
}

.stacked::after {
    background: linear-gradient(90deg, #76b9ed 80%, #4a789c 80%);
}

.focused {
    background: #3c3c3c;
}

.focused::after {
    left: 0;
    right: 0;
}

.tray {
    display: flex;
    align-items: center;
    gap: 8px;
    margin-right: 4px;
    padding-right: 20px;
    border-right: 1px solid #555;
}

.ime {
    width: 16px;
    font-size: 13px;
    text-align: center;
}

.clock {
    display: flex;
    flex-direction: column;
    align-items: center;
    width: 60px;
    margin: 0 11px 0 1px;
    white-space: nowrap;
}
```
